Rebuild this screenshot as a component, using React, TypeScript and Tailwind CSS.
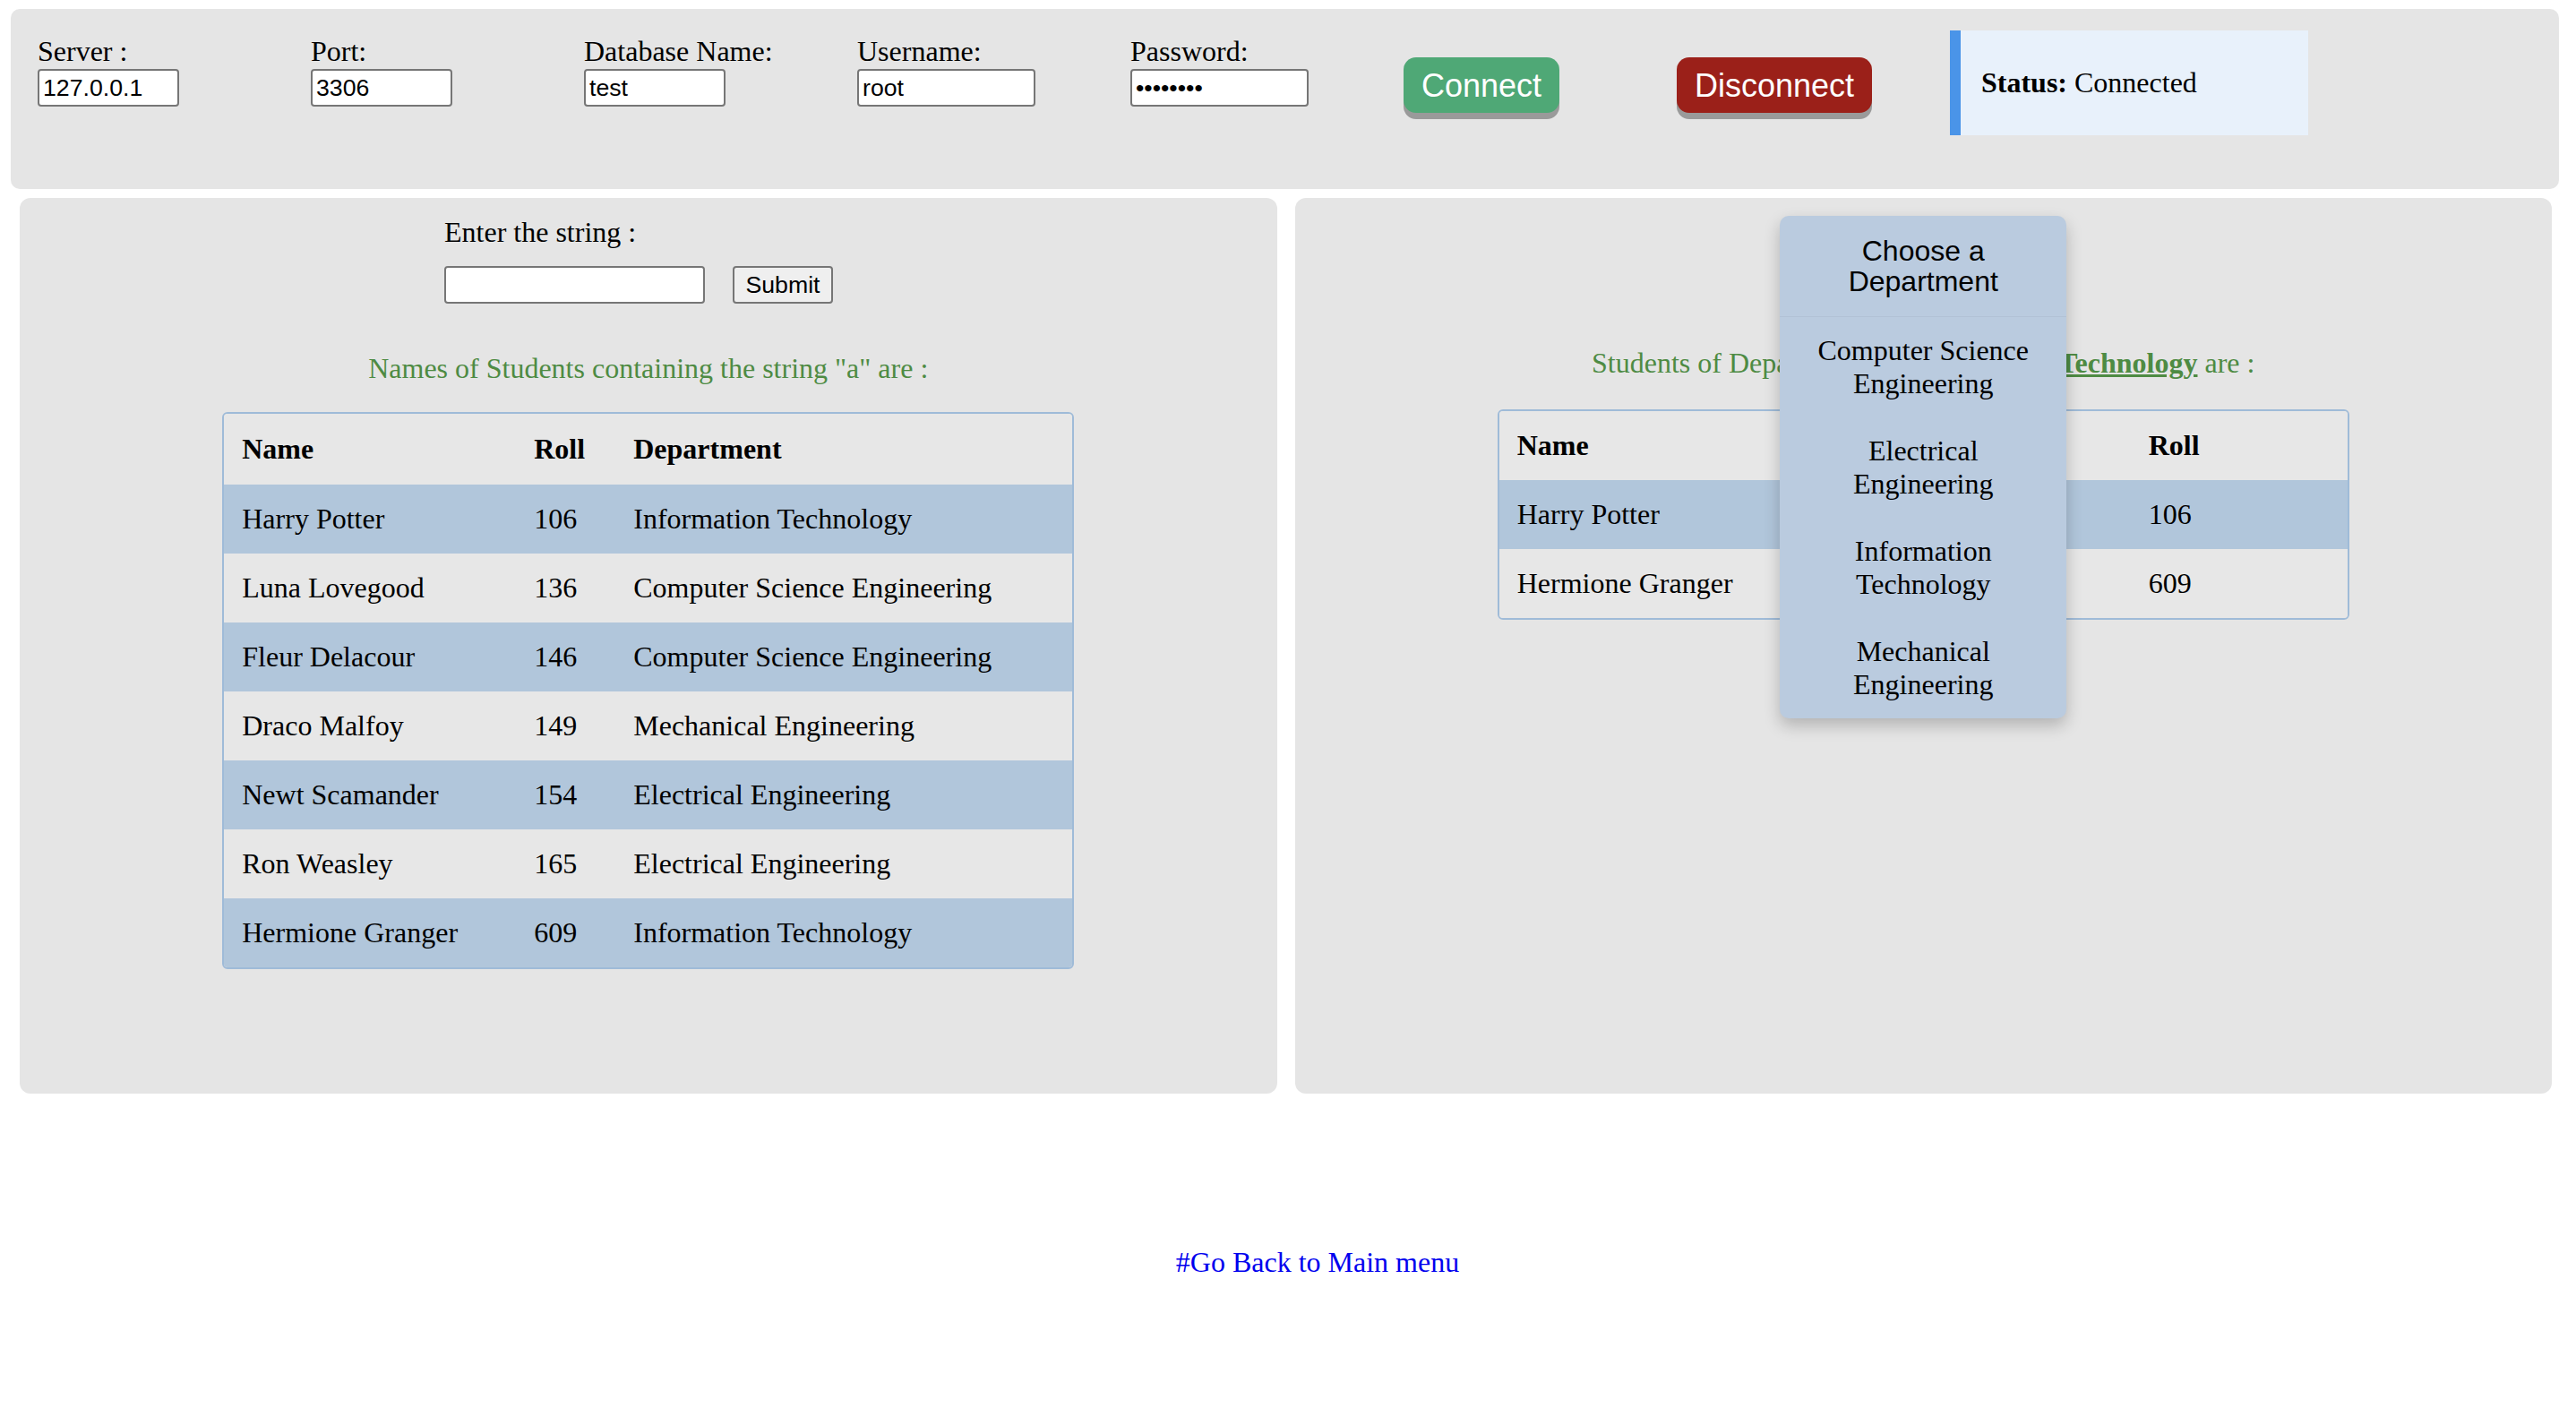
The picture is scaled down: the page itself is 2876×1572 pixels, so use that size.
import { useState } from "react";

type Student = { name: string; roll: number; dept: string };

const students: Student[] = [
  { name: "Harry Potter", roll: 106, dept: "Information Technology" },
  { name: "Luna Lovegood", roll: 136, dept: "Computer Science Engineering" },
  { name: "Fleur Delacour", roll: 146, dept: "Computer Science Engineering" },
  { name: "Draco Malfoy", roll: 149, dept: "Mechanical Engineering" },
  { name: "Newt Scamander", roll: 154, dept: "Electrical Engineering" },
  { name: "Ron Weasley", roll: 165, dept: "Electrical Engineering" },
  { name: "Hermione Granger", roll: 609, dept: "Information Technology" },
];

const departments = [
  ["Computer Science", "Engineering"],
  ["Electrical", "Engineering"],
  ["Information", "Technology"],
  ["Mechanical", "Engineering"],
];

const serif = "font-['Liberation_Serif',serif]";
const sans = "font-['Liberation_Sans',Arial,sans-serif]";

function Field({ label, value, width, type = "text" }: { label: string; value: string; width: string; type?: string }) {
  return (
    <div className="w-[305px] shrink-0 mt-[29px]">
      <div className="text-[32px] leading-[37px]">{label}</div>
      <input
        type={type}
        defaultValue={value}
        className={`${sans} ${width} mt-[1px] h-[42px] bg-white border-2 border-[#767676] rounded-[4px] px-[4px] text-[26.7px] text-black outline-none`}
      />
    </div>
  );
}

export default function App() {
  const [dept] = useState("Information Technology");
  const inDept = students.filter((s) => s.dept === dept);

  return (
    <div className={`${serif} text-black bg-white min-h-[1572px]`}>
      {/* connection bar */}
      <div className="ml-[12px] mt-[10px] w-[2845px] h-[201px] bg-[#e5e5e5] rounded-[10px] flex items-start pl-[30px]">
        <Field label="Server :" value="127.0.0.1" width="w-[158px]" />
        <Field label="Port:" value="3306" width="w-[158px]" />
        <Field label="Database Name:" value="test" width="w-[158px]" />
        <Field label="Username:" value="root" width="w-[199px]" />
        <Field label="Password:" value="password" width="w-[199px]" type="password" />
        <div className="w-[305px] shrink-0 pt-[54px]">
          <button className={`${sans} h-[62px] px-[20px] rounded-[14px] bg-[#4fa876] text-white text-[36px] leading-[41px] shadow-[0_7px_0_#9a9a9a]`}>
            Connect
          </button>
        </div>
        <div className="w-[305px] shrink-0 pt-[54px]">
          <button className={`${sans} h-[62px] px-[20px] rounded-[14px] bg-[#9b2019] text-white text-[36px] leading-[41px] shadow-[0_7px_0_#9a9a9a]`}>
            Disconnect
          </button>
        </div>
        <div className="mt-[24px] w-[400px] h-[117px] flex items-center border-l-[12px] border-[#4a94e8] bg-[#e8f1fb] pl-[23px] text-[32px] leading-[37px]">
          <span>
            <b>Status:</b> Connected
          </span>
        </div>
      </div>

      {/* panels */}
      <div className="mt-[10px] pl-[22px] pr-[27px] grid grid-cols-2 gap-[20px]">
        {/* search by string */}
        <div className="bg-[#e5e5e5] rounded-[12px] h-[1000px] pt-[20px]">
          <div className="ml-[474px] w-fit">
            <div className="text-[32px] leading-[37px]">Enter the string :</div>
            <div className="mt-[19px] flex gap-[31px]">
              <input
                type="text"
                className={`${sans} w-[291px] h-[42px] bg-white border-2 border-[#767676] rounded-[4px] px-[4px] text-[26.7px] outline-none`}
              />
              <button className={`${sans} w-[112px] h-[42px] bg-[#efefef] border-2 border-[#767676] rounded-[4px] text-[26.7px] leading-none`}>
                Submit
              </button>
            </div>
          </div>
          <p className="mt-[54px] text-center text-[32px] leading-[37px] text-[#4e8b43]">
            Names of Students containing the string "a" are :
          </p>
          <div className="mt-[30px] mx-auto w-[951px] border-2 border-[#9fbbd8] rounded-[6px] overflow-hidden">
            <table className="w-full text-left text-[32px] leading-[37px] border-collapse">
              <thead>
                <tr className="bg-[#e7e7e7]">
                  <th className="w-[326px] pl-[20px] py-[21px] font-bold">Name</th>
                  <th className="w-[111px] pl-[20px] py-[21px] font-bold">Roll</th>
                  <th className="pl-[20px] py-[21px] font-bold">Department</th>
                </tr>
              </thead>
              <tbody>
                {students.map((s, i) => (
                  <tr key={s.roll} className={i % 2 === 0 ? "bg-[#b1c6db]" : "bg-[#e7e7e7]"}>
                    <td className="pl-[20px] py-[20px]">{s.name}</td>
                    <td className="pl-[20px] py-[20px]">{s.roll}</td>
                    <td className="pl-[20px] py-[20px]">{s.dept}</td>
                  </tr>
                ))}
              </tbody>
            </table>
          </div>
        </div>

        {/* search by department */}
        <div className="bg-[#e5e5e5] rounded-[12px] h-[1000px] pt-[20px]">
          <div className="relative mx-auto w-[320px] h-[113px]">
            <div className="absolute top-0 left-0 w-full z-10 rounded-[10px] bg-[#bacbdf] shadow-[0_8px_18px_rgba(0,0,0,0.22)]">
              <div className={`${sans} h-[113px] flex items-center justify-center text-center px-[16px] text-[32px] leading-[34px] border-b border-[#b2c2d6]`}>
                Choose a Department
              </div>
              {departments.map(([a, b]) => (
                <div key={a} className="px-[20px] py-[19px] text-center text-[32px] leading-[37px]">
                  {a}
                  <br />
                  {b}
                </div>
              ))}
            </div>
          </div>
          <p className="mt-[33px] text-center text-[32px] leading-[37px] text-[#4e8b43]">
            Students of Department of <span className="font-bold underline">{dept}</span> are :
          </p>
          <div className="mt-[33px] mx-auto w-[951px] border-2 border-[#9fbbd8] rounded-[6px] overflow-hidden">
            <table className="w-full text-left text-[32px] leading-[37px] border-collapse">
              <thead>
                <tr className="bg-[#e7e7e7]">
                  <th className="w-[705px] pl-[20px] py-[20px] font-bold">Name</th>
                  <th className="pl-[20px] py-[20px] font-bold">Roll</th>
                </tr>
              </thead>
              <tbody>
                {inDept.map((s, i) => (
                  <tr key={s.roll} className={i % 2 === 0 ? "bg-[#b1c6db]" : "bg-[#e7e7e7]"}>
                    <td className="pl-[20px] py-[20px]">{s.name}</td>
                    <td className="pl-[20px] py-[20px]">{s.roll}</td>
                  </tr>
                ))}
              </tbody>
            </table>
          </div>
        </div>
      </div>

      <div className="mt-[170px] pl-[66px] text-center text-[32px] leading-[37px]">
        <a href="#" className="text-[#0000ee]">
          #Go Back to Main menu
        </a>
      </div>
    </div>
  );
}
